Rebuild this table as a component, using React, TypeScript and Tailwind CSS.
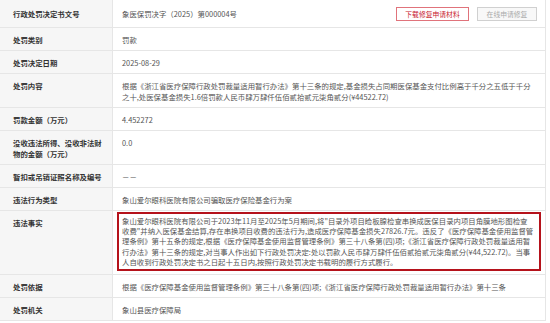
import React from 'react';

const font = { fontFamily: '"Noto Sans CJK SC", "Noto Sans", sans-serif' };

interface RowProps {
  label: React.ReactNode;
  children?: React.ReactNode;
  className?: string;
}

const Row: React.FC<RowProps> = ({ label, children, className }) => (
  <div className={`flex border-b border-[#e6e6e6] ${className ?? ''}`}>
    <div className="w-[113px] shrink-0 bg-[#f6f6f6] border-r border-[#e6e6e6] pl-[13px] pr-[4px] py-[5.5px] flex items-center font-bold text-[#333]">
      <div>{label}</div>
    </div>
    <div className="flex-1 pl-[9px] pr-[8px] py-[5.5px] flex items-center text-[#555] whitespace-nowrap">{children}</div>
  </div>
);

const App: React.FC = () => {
  return (
    <div className="w-[550px] h-[323px] bg-white overflow-hidden" style={font}>
      <div className="w-[546px] border-r border-[#e6e6e6] text-[7.4px] leading-[11px]">
        <Row label="行政处罚决定书文号" className="h-[28px]">
          <div className="flex-1">象医保罚决字（2025）第000004号</div>
          <div className="flex gap-[8px] text-[6.8px] leading-[12px]">
            <button className="w-[73px] border border-[#e0737b] text-[#c8202c] bg-white">下载修复申请材料</button>
            <button className="w-[60px] border border-[#d0d0d0] text-[#aaa] bg-[#f8f8f8]">在线申请修复</button>
          </div>
        </Row>
        <Row label="处罚类别">罚款</Row>
        <Row label="处罚决定日期">2025-08-29</Row>
        <Row label="处罚内容" className="[&>div:first-child]:items-start">
          <div>
            根据《浙江省医疗保障行政处罚裁量适用暂行办法》第十三条的规定,基金损失占同期医保基金支付比例高于千分之五低于千分
            <br />
            之十,处医保基金损失1.6倍罚款人民币肆万肆仟伍佰贰拾贰元柒角贰分(¥44522.72)
          </div>
        </Row>
        <Row label="罚款金额（万元）">4.452272</Row>
        <Row
          label={
            <>
              没收违法所得、没收非法财
              <br />
              物的金额（万元）
            </>
          }
          className="[&>div:last-child]:items-start"
        >
          0.0
        </Row>
        <Row label="暂扣或吊销证照名称及编号">－－</Row>
        <Row label="违法行为类型">象山爱尔眼科医院有限公司骗取医疗保险基金行为案</Row>
        <Row
          label="违法事实"
          className="[&>div:first-child]:items-start [&>div:first-child]:pt-[6px] [&>div:last-child]:pt-[1px] [&>div:last-child]:pb-[3px] [&>div:last-child]:pl-[4px] [&>div:last-child]:pr-[4px]"
        >
          <div className="w-full border-2 border-[#b5121b] px-[3px] py-[2px] leading-[10.2px]">
            象山爱尔眼科医院有限公司于2023年11月至2025年5月期间,将"目录外项目睑板腺检查串换成医保目录内项目角膜地形图检查
            <br />
            收费"并纳入医保基金结算,存在串换项目收费的违法行为,造成医疗保障基金损失27826.7元。违反了《医疗保障基金使用监督管
            <br />
            理条例》第十五条的规定,根据《医疗保障基金使用监督管理条例》第三十八条第(四)项;《浙江省医疗保障行政处罚裁量适用暂
            <br />
            行办法》第十三条的规定,对当事人作出如下行政处罚决定:处以罚款人民币肆万肆仟伍佰贰拾贰元柒角贰分(¥44,522.72)。当事
            <br />
            人自收到行政处罚决定书之日起十五日内,按照行政处罚决定书载明的履行方式履行。
          </div>
        </Row>
        <Row label="处罚依据">
          根据《医疗保障基金使用监督管理条例》第三十八条第(四)项;《浙江省医疗保障行政处罚裁量适用暂行办法》第十三条
        </Row>
        <Row label="处罚机关">象山县医疗保障局</Row>
      </div>
    </div>
  );
};

export default App;
